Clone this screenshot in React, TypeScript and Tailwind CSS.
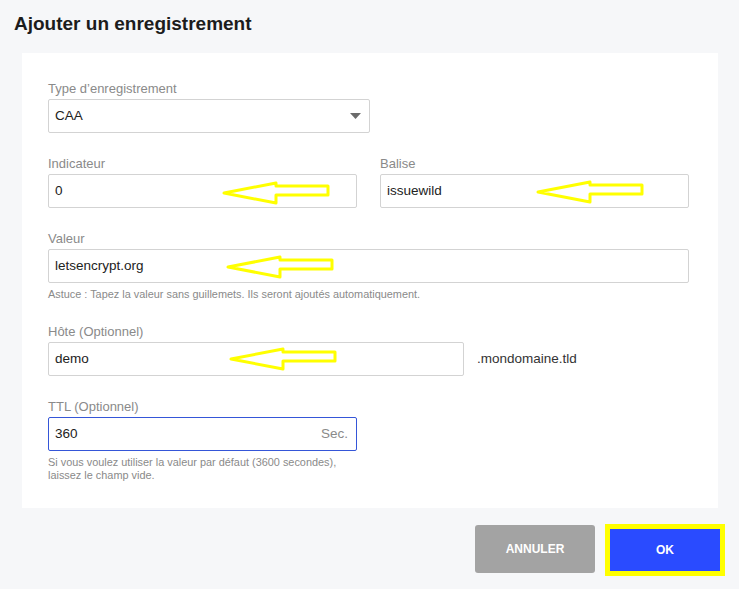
import { ReactNode } from "react";

const Arrow = ({ left, top }: { left: number; top: number }) => (
  <svg
    className="absolute pointer-events-none"
    style={{ left, top }}
    width="110"
    height="26"
    viewBox="0 0 110 26"
    fill="none"
  >
    <polygon
      points="3,13 55,3 55,6 107,6 107,15 55,15 55,23"
      stroke="#ffff00"
      strokeWidth="3"
      strokeLinejoin="round"
    />
  </svg>
);

interface FieldProps {
  label: string;
  children: ReactNode;
  className?: string;
}

const Field = ({ label, children, className = "" }: FieldProps) => (
  <div className={`flex flex-col ${className}`}>
    <label className="text-[13px] leading-[18px] text-[#8a8a8a] mb-[1px]">{label}</label>
    {children}
  </div>
);

const boxCls =
  "relative h-[34px] border rounded-[2px] bg-white flex items-center px-[6px] text-[13.5px] text-[#222]";
const inputCls = `${boxCls} border-[#d3d3d3]`;

const App = () => {
  return (
    <div className="min-h-screen w-full bg-[#f6f7f9] font-['Liberation_Sans',Arial,sans-serif]">
      <h1 className="pt-[13px] px-[14px] text-[19px] leading-[22px] font-bold text-[#1c1c1c]">
        Ajouter un enregistrement
      </h1>

      <div className="mt-[18px] ml-[22px] w-[696px] bg-white pt-[27px] pb-[26px] pl-[26px] pr-[29px] flex flex-col gap-[22px]">
        <Field label="Type d’enregistrement" className="w-[322px]">
          <div className={`${inputCls} justify-between pr-[8px]`}>
            <span>CAA</span>
            <svg width="11" height="6" viewBox="0 0 11 6">
              <polygon points="0,0 11,0 5.5,6" fill="#6b6b6b" />
            </svg>
          </div>
        </Field>

        <div className="flex gap-[23px]">
          <Field label="Indicateur" className="w-[309px]">
            <div className={inputCls}>
              <span>0</span>
              <Arrow left={172} top={5} />
            </div>
          </Field>
          <Field label="Balise" className="w-[309px]">
            <div className={inputCls}>
              <span>issuewild</span>
              <Arrow left={154} top={4} />
            </div>
          </Field>
        </div>

        <div className="flex flex-col">
          <Field label="Valeur" className="w-[641px]">
            <div className={inputCls}>
              <span>letsencrypt.org</span>
              <Arrow left={176} top={4} />
            </div>
          </Field>
          <p className="mt-[5px] text-[10.9px] leading-[13px] text-[#8a8a8a]">
            Astuce : Tapez la valeur sans guillemets. Ils seront ajoutés automatiquement.
          </p>
        </div>

        <div className="flex items-end gap-[13px]">
          <Field label="Hôte (Optionnel)" className="w-[416px]">
            <div className={inputCls}>
              <span>demo</span>
              <Arrow left={179} top={3} />
            </div>
          </Field>
          <span className="h-[34px] flex items-center text-[13.5px] text-[#333]">.mondomaine.tld</span>
        </div>

        <div className="flex flex-col w-[309px]">
          <Field label="TTL (Optionnel)">
            <div className={`${boxCls} border-[#3556d8] justify-between pr-[8px]`}>
              <span>360</span>
              <span className="text-[#8a8a8a]">Sec.</span>
            </div>
          </Field>
          <p className="mt-[5px] text-[10.9px] leading-[13px] text-[#8a8a8a]">
            Si vous voulez utiliser la valeur par défaut (3600 secondes), laissez le champ vide.
          </p>
        </div>
      </div>

      <div className="mt-[16px] pr-[14px] flex justify-end items-start gap-[10px]">
        <button className="mt-[1px] w-[120px] h-[48px] rounded-[3px] bg-[#a3a3a3] text-white text-[12px] font-bold">
          ANNULER
        </button>
        <button className="w-[120px] h-[52px] border-[5px] border-[#ffff00] bg-[#2a4bff] text-white text-[12px] font-bold">
          OK
        </button>
      </div>
    </div>
  );
};

export default App;
